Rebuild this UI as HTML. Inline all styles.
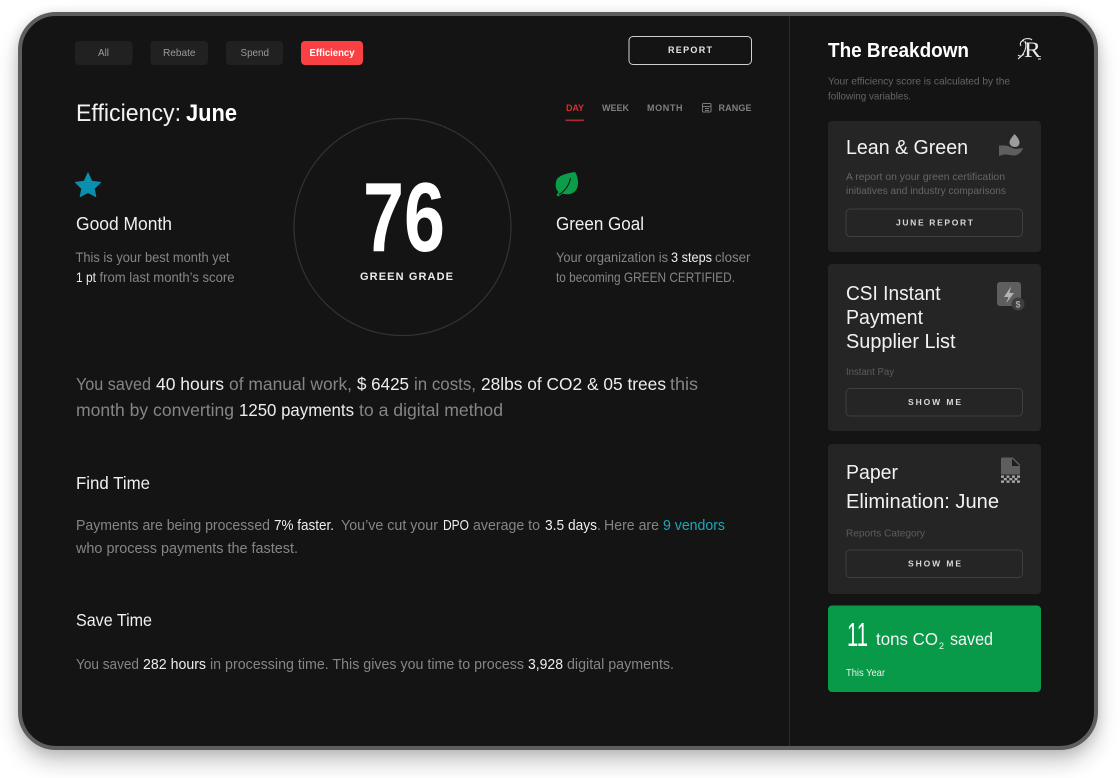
<!DOCTYPE html>
<html><head><meta charset="utf-8"><style>
html,body{margin:0;padding:0;background:#fff;width:1120px;height:778px;overflow:hidden}
#f{position:absolute;left:18px;top:12px;width:1072px;height:730px;border:4px solid #5e5e5e;border-radius:38px;background:#141414;box-shadow:0 12px 22px rgba(0,0,0,.22),0 2px 12px rgba(0,0,0,.12)}
svg{position:absolute;left:0;top:0}
text{font-family:"Liberation Sans",sans-serif}
</style></head><body><div id="f"></div>
<svg width="1120" height="778" viewBox="0 0 1120 778" xmlns="http://www.w3.org/2000/svg">
<line x1="789.5" y1="16" x2="789.5" y2="746" stroke="#2b2b2b"/>
<!-- tabs -->
<rect x="75" y="41" width="57.5" height="24" rx="4" fill="#212121"/>
<rect x="150.5" y="41" width="57.5" height="24" rx="4" fill="#212121"/>
<rect x="226" y="41" width="57" height="24" rx="4" fill="#212121"/>
<rect x="301" y="41" width="62" height="24" rx="4" fill="#f94144"/>
<g font-size="10.5" fill="#9a9a9a">
<text x="98" y="56" textLength="11" lengthAdjust="spacingAndGlyphs">All</text>
<text x="163" y="56" textLength="32.5" lengthAdjust="spacingAndGlyphs">Rebate</text>
<text x="240.500" y="56" textLength="28.500" lengthAdjust="spacingAndGlyphs">Spend</text>
<text x="309.500" y="56" textLength="45" lengthAdjust="spacingAndGlyphs" fill="#fff" font-weight="bold">Efficiency</text>
</g>
<rect x="629" y="36.500" width="122.500" height="28" rx="4" fill="none" stroke="#cfcfcf" stroke-width="1"/>
<text x="668" y="53" font-size="9" font-weight="bold" fill="#e6e6e6" textLength="44">REPORT</text>
<!-- heading -->
<text x="76" y="121" font-size="24" fill="#f2f2f2" textLength="105" lengthAdjust="spacingAndGlyphs">Efficiency:</text>
<text x="186" y="121" font-size="24" font-weight="bold" fill="#fff" textLength="51" lengthAdjust="spacingAndGlyphs">June</text>
<g font-size="9" font-weight="bold" fill="#7f7f7f">
<text x="566" y="111" fill="#d5302f" textLength="18">DAY</text>
<text x="602" y="111" textLength="27">WEEK</text>
<text x="647" y="111" textLength="35.500">MONTH</text>
<text x="718.500" y="111" textLength="33">RANGE</text>
</g>
<rect x="565.500" y="119.500" width="18.500" height="1.600" fill="#a82a2a"/>
<g fill="none" stroke="#7a7a7a" stroke-width="1"><rect x="702.500" y="103.500" width="8.500" height="8.500" rx="1"/><path d="M702.500 106.500h8.500M705 108.500h4M705 110.500h4"/></g>
<!-- star -->
<path d="M88 173 L91.800 181.200 L100.500 182.400 L94.200 188.600 L95.800 196.500 L88 192.400 L80.200 196.500 L81.800 188.600 L75.500 182.400 L84.200 181.200Z" fill="#0a8fae" stroke="#0a8fae" stroke-width="1" stroke-linejoin="round"/>
<text x="76" y="230" font-size="18" fill="#efefef" textLength="96" lengthAdjust="spacingAndGlyphs">Good Month</text>
<g font-size="14" fill="#858585">
<text x="75.500" y="262" textLength="154" lengthAdjust="spacingAndGlyphs">This is your best month yet</text>
<text x="76" y="282" textLength="20" lengthAdjust="spacingAndGlyphs" fill="#eee">1 pt</text>
<text x="99.500" y="282" textLength="135" lengthAdjust="spacingAndGlyphs">from last month’s score</text>
</g>
<!-- circle -->
<circle cx="402.500" cy="227" r="108.500" fill="none" stroke="#333" stroke-width="1.200"/>
<text x="363" y="251" font-size="98" font-weight="bold" fill="#fff" textLength="82" lengthAdjust="spacingAndGlyphs">76</text>
<text x="360" y="280" font-size="11" font-weight="bold" fill="#ececec" textLength="93">GREEN GRADE</text>
<!-- leaf -->
<path d="M575 172C578 176 579.500 186 576 190C573 194.500 567 195 563 193.500L558 196.500L556.500 195L558.500 192C555 189 555 183 557 179C560 175 568 173 575 172Z" fill="#0b9e4a"/>
<path d="M559 194.500C565 191 569 186 570.500 178" stroke="#141414" stroke-width="1" fill="none"/>
<text x="556" y="230" font-size="18" fill="#efefef" textLength="88" lengthAdjust="spacingAndGlyphs">Green Goal</text>
<g font-size="14" fill="#858585">
<text x="556" y="262" textLength="112" lengthAdjust="spacingAndGlyphs">Your organization is</text>
<text x="671" y="262" textLength="41" lengthAdjust="spacingAndGlyphs" fill="#eee">3 steps</text>
<text x="715" y="262" textLength="35.500" lengthAdjust="spacingAndGlyphs">closer</text>
<text x="556" y="282" textLength="179" lengthAdjust="spacingAndGlyphs">to becoming GREEN CERTIFIED.</text>
</g>
<!-- paragraph -->
<g font-size="17.500" fill="#858585">
<text x="76" y="390" textLength="75" lengthAdjust="spacingAndGlyphs">You saved</text>
<text x="156" y="390" textLength="68" lengthAdjust="spacingAndGlyphs" fill="#eee">40 hours</text>
<text x="229" y="390" textLength="123" lengthAdjust="spacingAndGlyphs">of manual work,</text>
<text x="357" y="390" textLength="52" lengthAdjust="spacingAndGlyphs" fill="#eee">$ 6425</text>
<text x="414" y="390" textLength="62" lengthAdjust="spacingAndGlyphs">in costs,</text>
<text x="481" y="390" textLength="185" lengthAdjust="spacingAndGlyphs" fill="#eee">28lbs of CO2 &amp; 05 trees</text>
<text x="670" y="390" textLength="28" lengthAdjust="spacingAndGlyphs">this</text>
<text x="76" y="416" textLength="158" lengthAdjust="spacingAndGlyphs">month by converting</text>
<text x="239" y="416" textLength="115" lengthAdjust="spacingAndGlyphs" fill="#eee">1250 payments</text>
<text x="359" y="416" textLength="144" lengthAdjust="spacingAndGlyphs">to a digital method</text>
</g>
<text x="76" y="489" font-size="17.500" fill="#f0f0f0" textLength="74" lengthAdjust="spacingAndGlyphs">Find Time</text>
<g font-size="14.500" fill="#858585">
<text x="76" y="530" textLength="194" lengthAdjust="spacingAndGlyphs">Payments are being processed</text>
<text x="274" y="530" textLength="60" lengthAdjust="spacingAndGlyphs" fill="#eee">7% faster.</text>
<text x="341" y="530" textLength="97" lengthAdjust="spacingAndGlyphs">You’ve cut your</text>
<text x="443" y="530" textLength="26" lengthAdjust="spacingAndGlyphs" fill="#eee">DPO</text>
<text x="473" y="530" textLength="67" lengthAdjust="spacingAndGlyphs">average to</text>
<text x="545" y="530" textLength="52" lengthAdjust="spacingAndGlyphs" fill="#eee">3.5 days</text>
<text x="597" y="530">.</text>
<text x="604" y="530" textLength="55" lengthAdjust="spacingAndGlyphs">Here are</text>
<text x="663" y="530" textLength="62" lengthAdjust="spacingAndGlyphs" fill="#1ba8b8">9 vendors</text>
<text x="76" y="553" textLength="222" lengthAdjust="spacingAndGlyphs">who process payments the fastest.</text>
</g>
<text x="76" y="626" font-size="17.500" fill="#f0f0f0" textLength="76" lengthAdjust="spacingAndGlyphs">Save Time</text>
<g font-size="14.500" fill="#858585">
<text x="76" y="669" textLength="63" lengthAdjust="spacingAndGlyphs">You saved</text>
<text x="143" y="669" textLength="63" lengthAdjust="spacingAndGlyphs" fill="#eee">282 hours</text>
<text x="210" y="669" textLength="314" lengthAdjust="spacingAndGlyphs">in processing time. This gives you time to process</text>
<text x="528" y="669" textLength="35" lengthAdjust="spacingAndGlyphs" fill="#eee">3,928</text>
<text x="567" y="669" textLength="107" lengthAdjust="spacingAndGlyphs">digital payments.</text>
</g>
<!-- sidebar -->
<text x="828" y="57" font-size="20" font-weight="bold" fill="#fff" textLength="141" lengthAdjust="spacingAndGlyphs">The Breakdown</text>
<text x="1024" y="57" font-size="22" fill="#e8e8e8" style="font-family:'Liberation Serif',serif" textLength="17" lengthAdjust="spacingAndGlyphs">R</text>
<path d="M1022 41c2-3 8-3 10-1M1025 41c2 5 0 10-2 13c-1 2-3 3-5 5M1018 55c2 2 4 1 6-1M1021 46c-2-3 1-6 3-5M1038 59h3" stroke="#e8e8e8" stroke-width="1.100" fill="none"/>
<g font-size="10.500" fill="#656565">
<text x="828" y="84.500" textLength="182" lengthAdjust="spacingAndGlyphs">Your efficiency score is calculated by the</text>
<text x="828" y="99.500" textLength="83" lengthAdjust="spacingAndGlyphs">following variables.</text>
</g>
<!-- card 1 -->
<rect x="828" y="121" width="213" height="131" rx="4" fill="#252525"/>
<text x="846" y="154" font-size="20" fill="#f2f2f2" textLength="122" lengthAdjust="spacingAndGlyphs">Lean &amp; Green</text>
<path d="M999 145.500h6c3 0 6 2 9 3c2 .7 6 0 9-.5c-1 4-5 7.500-9 7.500c-4 0-8-1.500-10-1l-5 1.500Z" fill="#5e5e5e"/>
<path d="M1014.500 134c3 3 5 6 5 8.500c0 3-2 4.500-4.500 4.500c-3 0-5.500-2-5.500-4.500c0-3 3-6 5-8.500Z" fill="#9c9c9c"/>
<g font-size="10.500" fill="#666">
<text x="846" y="180" textLength="159" lengthAdjust="spacingAndGlyphs">A report on your green certification</text>
<text x="846" y="194" textLength="160" lengthAdjust="spacingAndGlyphs">initiatives and industry comparisons</text>
</g>
<rect x="846" y="209" width="176.500" height="27.500" rx="4" fill="none" stroke="#3f3f3f"/>
<text x="896" y="225.500" font-size="8.500" font-weight="bold" fill="#d8d8d8" textLength="77">JUNE REPORT</text>
<!-- card 2 -->
<rect x="828" y="264" width="213" height="167" rx="4" fill="#252525"/>
<g font-size="20" fill="#f2f2f2">
<text x="846" y="300" textLength="94.500" lengthAdjust="spacingAndGlyphs">CSI Instant</text>
<text x="846" y="324" textLength="77" lengthAdjust="spacingAndGlyphs">Payment</text>
<text x="846" y="348" textLength="109.500" lengthAdjust="spacingAndGlyphs">Supplier List</text>
</g>
<rect x="997" y="282" width="24" height="24" rx="3" fill="#5e5e5e"/>
<path d="M1011 286.500L1004 297h4.500L1006 303.500L1014 293h-4.500Z" fill="#b4b4b4"/>
<circle cx="1018" cy="304" r="6.500" fill="#3e3e3e"/>
<text x="1015.500" y="307.500" font-size="9" font-weight="bold" fill="#a8a8a8">$</text>
<text x="846" y="375" font-size="10.500" fill="#5c5c5c" textLength="48" lengthAdjust="spacingAndGlyphs">Instant Pay</text>
<rect x="846" y="388.500" width="176.500" height="27.500" rx="4" fill="none" stroke="#3f3f3f"/>
<text x="908" y="405" font-size="8.500" font-weight="bold" fill="#d8d8d8" textLength="53">SHOW ME</text>
<!-- card 3 -->
<rect x="828" y="444" width="213" height="150" rx="4" fill="#252525"/>
<text x="846" y="479" font-size="20" fill="#f2f2f2" textLength="52" lengthAdjust="spacingAndGlyphs">Paper</text>
<text x="846" y="508" font-size="20" fill="#f2f2f2" textLength="153" lengthAdjust="spacingAndGlyphs">Elimination: June</text>
<path d="M1002.500 457.500h10.500l7 7v10h-19v-15.500c0-1 .7-1.500 1.500-1.500Z" fill="#5e5e5e"/>
<path d="M1012 458.500v7.500h7.500Z" fill="#1e1e1e"/>
<g fill="#a8a8a8"><rect x="1001" y="475.500" width="3" height="2.300"/><rect x="1006.500" y="475.500" width="3" height="2.300"/><rect x="1012" y="475.500" width="3" height="2.300"/><rect x="1017" y="475.500" width="3" height="2.300"/><rect x="1003.800" y="478" width="3" height="2.300"/><rect x="1009.300" y="478" width="3" height="2.300"/><rect x="1014.500" y="478" width="3" height="2.300"/><rect x="1001" y="480.500" width="3" height="2.300"/><rect x="1006.500" y="480.500" width="3" height="2.300"/><rect x="1012" y="480.500" width="3" height="2.300"/><rect x="1017" y="480.500" width="3" height="2.300"/></g>
<text x="846" y="536.500" font-size="10.500" fill="#5c5c5c" textLength="79" lengthAdjust="spacingAndGlyphs">Reports Category</text>
<rect x="846" y="550" width="176.500" height="27.500" rx="4" fill="none" stroke="#3f3f3f"/>
<text x="908" y="566.500" font-size="8.500" font-weight="bold" fill="#d8d8d8" textLength="53">SHOW ME</text>
<!-- green -->
<rect x="828" y="605.500" width="213" height="86.500" rx="4" fill="#089a48"/>
<text x="847" y="646" font-size="33" fill="#fff" textLength="21" lengthAdjust="spacingAndGlyphs">11</text>
<text x="876" y="645" font-size="17.500" fill="#f4f4f4" textLength="62" lengthAdjust="spacingAndGlyphs">tons CO</text>
<text x="939" y="649" font-size="9" fill="#f4f4f4">2</text>
<text x="950" y="645" font-size="17.500" fill="#f4f4f4" textLength="43" lengthAdjust="spacingAndGlyphs">saved</text>
<text x="846" y="676" font-size="10.500" fill="#e6f4ea" textLength="39" lengthAdjust="spacingAndGlyphs">This Year</text>
</svg></body></html>
